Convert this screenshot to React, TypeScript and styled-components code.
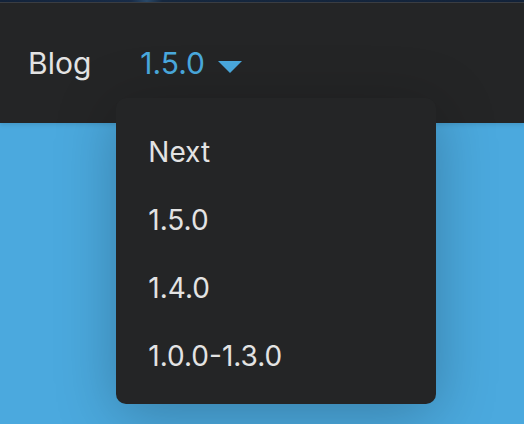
import React from "react";
import styled, { createGlobalStyle } from "styled-components";

const Global = createGlobalStyle`
  html, body { margin: 0; padding: 0; }
  body {
    background: #4ba9de;
    font-family: Inter, "Noto Sans", "Liberation Sans", sans-serif;
    -webkit-font-smoothing: antialiased;
  }
`;

const Page = styled.div`
  width: 524px;
  height: 424px;
  display: flex;
  flex-direction: column;
  overflow: hidden;
  background: #4ba9de;
`;

const TopStrip = styled.div`
  height: 2px;
  flex: none;
  background: linear-gradient(90deg, #13233a 0%, #182c48 25%, #2a4a6a 28%, #16283f 31%, #13233a 100%);
  border-bottom: 1px solid #3b3e43;
`;

const Navbar = styled.nav`
  position: relative;
  z-index: 2;
  height: 120px;
  flex: none;
  display: flex;
  align-items: center;
  padding-left: 4px;
  background: #242526;
  box-shadow: 0 2px 4px rgba(0, 0, 0, 0.1);
`;

const NavLink = styled.a<{ $active?: boolean }>`
  display: flex;
  align-items: center;
  padding: 0 25px 0 24px;
  font-size: 30px;
  line-height: 40px;
  font-weight: 400;
  color: ${(p) => (p.$active ? "#4aa9de" : "#e3e3e3")};
  text-decoration: none;
  cursor: pointer;
`;

const Caret = styled.span`
  width: 0;
  height: 0;
  margin-left: 13px;
  margin-top: 8px;
  border-style: solid;
  border-width: 12px 12px 0 12px;
  border-color: #4aa9de transparent transparent transparent;
`;

const DropdownWrap = styled.div`
  position: relative;
`;

const Menu = styled.ul`
  position: absolute;
  top: 55px;
  left: 0;
  width: 320px;
  margin: 0;
  padding: 20px 0 14px;
  list-style: none;
  background: #242526;
  border-radius: 10px;
  box-shadow: 0 10px 60px rgba(0, 0, 0, 0.25);
`;

const MenuItem = styled.li`
  height: 68px;
  display: flex;
  align-items: center;
  padding-left: 32px;
  font-size: 28px;
  color: #e3e3e3;
`;

const Hero = styled.div`
  flex: 1;
  background: #4ba9de;
`;

export default function App() {
  const versions = ["Next", "1.5.0", "1.4.0", "1.0.0-1.3.0"];
  return (
    <>
      <Global />
      <Page>
        <TopStrip />
        <Navbar>
          <NavLink>Blog</NavLink>
          <DropdownWrap>
            <NavLink $active>
              1.5.0
              <Caret />
            </NavLink>
            <Menu>
              {versions.map((v) => (
                <MenuItem key={v}>{v}</MenuItem>
              ))}
            </Menu>
          </DropdownWrap>
        </Navbar>
        <Hero />
      </Page>
    </>
  );
}
